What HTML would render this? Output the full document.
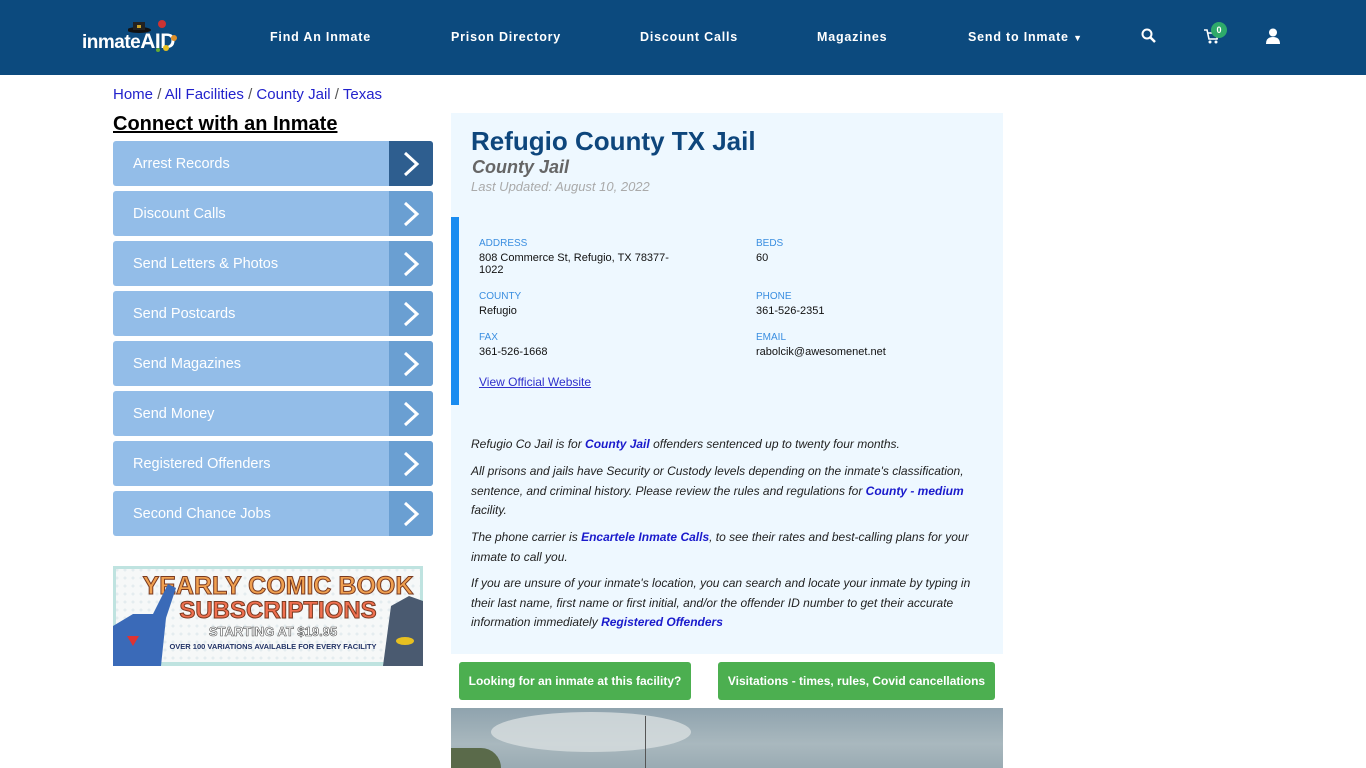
<!DOCTYPE html>
<html><head><meta charset="utf-8"><style>
*{box-sizing:border-box;margin:0;padding:0}
body{width:1366px;height:768px;overflow:hidden;background:#fff;font-family:"Liberation Sans",Arial,sans-serif;position:relative}
.nav{position:absolute;left:0;top:0;width:1366px;height:75px;background:#0c4a7e}
.nav a{position:absolute;top:30px;color:#fff;font-size:12.5px;font-weight:bold;letter-spacing:0.8px;text-decoration:none}
.crumb{position:absolute;left:113px;top:86px;font-size:15px;color:#2222cc}
.crumb span{color:#555}
h2.conn{position:absolute;left:113px;top:113px;font-size:20px;font-weight:bold;text-decoration:underline;color:#000}
.side{position:absolute;left:113px;width:320px;height:45px;background:#93bde8;border-radius:3px;color:#fff;font-size:14.5px;line-height:46px;padding-left:20px;overflow:hidden}
.side .ar{position:absolute;right:0;top:0;width:44px;height:45px;background:#6a9fd2}
.side .ar svg{position:absolute;left:12px;top:10px}
.main{position:absolute;left:451px;top:113px;width:552px;height:541px;background:#eef8ff}
.bar{position:absolute;left:451px;top:217px;width:8px;height:188px;background:#1a8cf0}
.lab{position:absolute;font-size:10px;color:#3a8ee0}
.val{position:absolute;font-size:11px;color:#111;line-height:12px}
.p{position:absolute;left:471px;width:520px;font-size:12px;font-style:italic;color:#222;line-height:19.5px}
.p b{color:#1a1acc;font-weight:bold}
.btn{position:absolute;top:662px;height:38px;background:#4caf50;border-radius:3px;color:#fff;font-weight:bold;font-size:12px;line-height:38px;text-align:center}
</style></head><body>
<div class="nav">
 <div style="position:absolute;left:82px;top:30px;color:#fff;font-size:19px;font-weight:bold;letter-spacing:-0.5px">inmate<span style="font-size:21px">AID</span></div>
 <svg style="position:absolute;left:128px;top:20px" width="52" height="35"><ellipse cx="11" cy="10" rx="12" ry="3" fill="#111"/><rect x="5" y="2" width="12" height="8" fill="#222"/><rect x="9" y="5" width="4" height="3" fill="#c9a227"/><circle cx="34" cy="4" r="4" fill="#c33"/><circle cx="46" cy="18" r="3" fill="#e0902a"/><circle cx="38" cy="28" r="3" fill="#e8c020"/><circle cx="30" cy="30" r="2" fill="#6a3"/></svg>
 <a style="left:270px">Find An Inmate</a>
 <a style="left:451px">Prison Directory</a>
 <a style="left:640px">Discount Calls</a>
 <a style="left:817px">Magazines</a>
 <a style="left:968px">Send to Inmate <span style="font-size:9px">&#9660;</span></a>
 <svg style="position:absolute;left:1141px;top:28px" width="16" height="16"><circle cx="6" cy="6" r="4.5" fill="none" stroke="#fff" stroke-width="2"/><path d="M9.5 9.5L14 14" stroke="#fff" stroke-width="2.5"/></svg>
 <svg style="position:absolute;left:1203px;top:28px" width="16" height="16"><path d="M1 2h3l2 9h8l1-6H5" fill="none" stroke="#fff" stroke-width="1.6"/><circle cx="7" cy="14" r="1.5" fill="#fff"/><circle cx="13" cy="14" r="1.5" fill="#fff"/></svg>
 <div style="position:absolute;left:1211px;top:22px;width:16px;height:16px;border-radius:8px;background:#2eaa6a;color:#fff;font-size:9px;font-weight:bold;text-align:center;line-height:16px">0</div>
 <svg style="position:absolute;left:1266px;top:28px" width="14" height="16"><circle cx="7" cy="4.5" r="4" fill="#fff"/><path d="M0 16q0-7 7-7t7 7z" fill="#fff"/></svg>
</div>
<div class="crumb">Home <span>/</span> All Facilities <span>/</span> County Jail <span>/</span> Texas</div>
<h2 class="conn">Connect with an Inmate</h2>
<div class="side" style="top:141px">Arrest Records<div class="ar" style="background:#2e5e8f"><svg width="20" height="26"><path d="M4 2l12 11L4 24" fill="none" stroke="#fff" stroke-width="3"/></svg></div></div>
<div class="side" style="top:191px">Discount Calls<div class="ar"><svg width="20" height="26"><path d="M4 2l12 11L4 24" fill="none" stroke="#fff" stroke-width="3"/></svg></div></div>
<div class="side" style="top:241px">Send Letters &amp; Photos<div class="ar"><svg width="20" height="26"><path d="M4 2l12 11L4 24" fill="none" stroke="#fff" stroke-width="3"/></svg></div></div>
<div class="side" style="top:291px">Send Postcards<div class="ar"><svg width="20" height="26"><path d="M4 2l12 11L4 24" fill="none" stroke="#fff" stroke-width="3"/></svg></div></div>
<div class="side" style="top:341px">Send Magazines<div class="ar"><svg width="20" height="26"><path d="M4 2l12 11L4 24" fill="none" stroke="#fff" stroke-width="3"/></svg></div></div>
<div class="side" style="top:391px">Send Money<div class="ar"><svg width="20" height="26"><path d="M4 2l12 11L4 24" fill="none" stroke="#fff" stroke-width="3"/></svg></div></div>
<div class="side" style="top:441px">Registered Offenders<div class="ar"><svg width="20" height="26"><path d="M4 2l12 11L4 24" fill="none" stroke="#fff" stroke-width="3"/></svg></div></div>
<div class="side" style="top:491px">Second Chance Jobs<div class="ar"><svg width="20" height="26"><path d="M4 2l12 11L4 24" fill="none" stroke="#fff" stroke-width="3"/></svg></div></div>
<svg style="position:absolute;left:113px;top:566px" width="310" height="100">
 <defs><pattern id="d" width="8" height="8" patternUnits="userSpaceOnUse"><circle cx="4" cy="4" r="1.5" fill="#e4ecef"/></pattern></defs>
 <rect width="310" height="100" fill="#bfe3e0"/><rect x="3" y="3" width="304" height="93" fill="#f6f8f8"/><rect x="3" y="3" width="304" height="93" fill="url(#d)"/>
 <text x="165" y="28" text-anchor="middle" font-family="Liberation Sans" font-weight="bold" font-size="25" fill="#f0a050" stroke="#7a3a20" stroke-width="1">YEARLY COMIC BOOK</text>
 <text x="165" y="52" text-anchor="middle" font-family="Liberation Sans" font-weight="bold" font-size="24" fill="#f07050" stroke="#7a3a20" stroke-width="1">SUBSCRIPTIONS</text>
 <text x="160" y="70" text-anchor="middle" font-family="Liberation Sans" font-weight="bold" font-size="13" fill="#fff" stroke="#555" stroke-width="0.6">STARTING AT $19.95</text>
 <text x="160" y="83" text-anchor="middle" font-family="Liberation Sans" font-weight="bold" font-size="7.5" fill="#223366">OVER 100 VARIATIONS AVAILABLE FOR EVERY FACILITY</text>
 <path d="M0 60l20-12 20 0 15-30 8 4-10 30 -5 48H0z" fill="#3a6ab8"/><path d="M14 70l12 0-6 10z" fill="#d33"/>
 <path d="M278 40l18-10 14 5v65h-40z" fill="#4a5a70"/><ellipse cx="292" cy="75" rx="9" ry="4" fill="#e8c020"/>
</svg>
<div class="main"></div>
<div style="position:absolute;left:471px;top:126px;font-size:26px;font-weight:bold;color:#0e467c">Refugio County TX Jail</div>
<div style="position:absolute;left:472px;top:157px;font-size:18px;font-weight:bold;font-style:italic;color:#666">County Jail</div>
<div style="position:absolute;left:471px;top:179px;font-size:13px;font-style:italic;color:#aaa">Last Updated: August 10, 2022</div>
<div class="bar"></div>
<div class="lab" style="left:479px;top:238px">ADDRESS</div>
<div class="val" style="left:479px;top:252px">808 Commerce St, Refugio, TX 78377-<br>1022</div>
<div class="lab" style="left:479px;top:291px">COUNTY</div>
<div class="val" style="left:479px;top:305px">Refugio</div>
<div class="lab" style="left:479px;top:332px">FAX</div>
<div class="val" style="left:479px;top:346px">361-526-1668</div>
<div class="val" style="left:479px;top:376px;color:#3030cc;text-decoration:underline;font-size:12px">View Official Website</div>
<div class="lab" style="left:756px;top:238px">BEDS</div>
<div class="val" style="left:756px;top:252px">60</div>
<div class="lab" style="left:756px;top:291px">PHONE</div>
<div class="val" style="left:756px;top:305px">361-526-2351</div>
<div class="lab" style="left:756px;top:332px">EMAIL</div>
<div class="val" style="left:756px;top:346px">rabolcik@awesomenet.net</div>
<div class="p" style="top:435px">Refugio Co Jail is for <b>County Jail</b> offenders sentenced up to twenty four months.</div>
<div class="p" style="top:462px">All prisons and jails have Security or Custody levels depending on the inmate's classification, sentence, and criminal history. Please review the rules and regulations for <b>County - medium</b> facility.</div>
<div class="p" style="top:528px">The phone carrier is <b>Encartele Inmate Calls</b>, to see their rates and best-calling plans for your inmate to call you.</div>
<div class="p" style="top:574px">If you are unsure of your inmate's location, you can search and locate your inmate by typing in their last name, first name or first initial, and/or the offender ID number to get their accurate information immediately <b>Registered Offenders</b></div>
<div class="btn" style="left:459px;width:232px">Looking for an inmate at this facility?</div>
<div class="btn" style="left:718px;width:277px">Visitations - times, rules, Covid cancellations</div>
<div style="position:absolute;left:451px;top:708px;width:552px;height:60px;background:linear-gradient(180deg,#8fa3ae,#a9b8be 60%,#9aabb3)">
 <div style="position:absolute;left:40px;top:4px;width:200px;height:40px;border-radius:50%;background:#d8dee0;opacity:.8"></div>
 <div style="position:absolute;left:194px;top:8px;width:1px;height:52px;background:#555"></div>
 <div style="position:absolute;left:0;top:40px;width:50px;height:20px;background:#5a6a4a;border-radius:0 30px 0 0"></div>
</div>
</body></html>
